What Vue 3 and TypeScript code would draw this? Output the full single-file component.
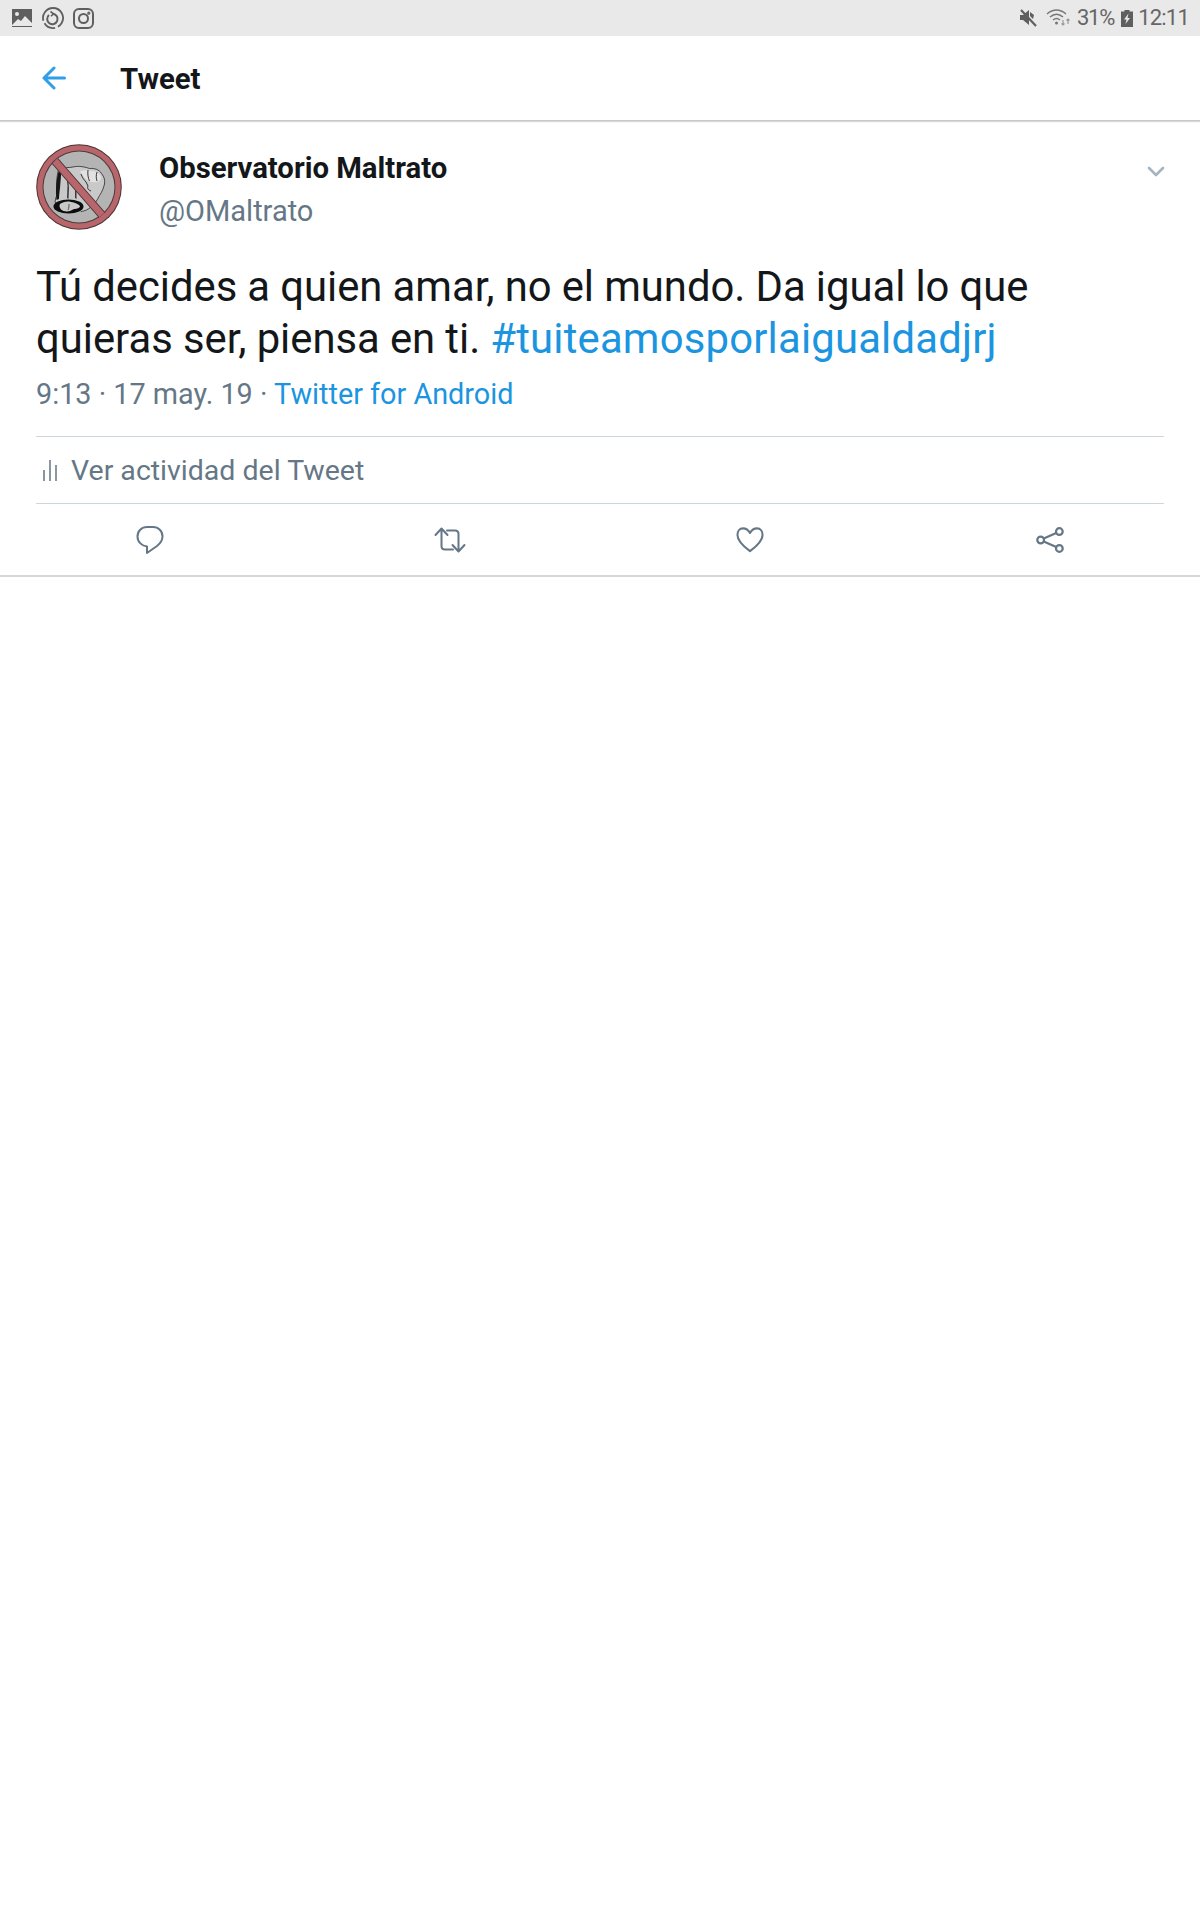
<script setup lang="ts">
const actions = ['reply', 'retweet', 'like', 'share']
</script>

<template>
  <div class="page">
    <div class="status">
      <div class="status-left">
        <svg width="22" height="20" viewBox="0 0 22 20"><path fill="#5f5f5f" d="M1 1h20v18H1z"/><circle cx="6" cy="6" r="2" fill="#e9e9e9"/><path fill="#e9e9e9" d="M1 17l6-6 3 2 4-5 7 7v3H1z"/></svg>
        <svg width="22" height="22" viewBox="0 0 22 22" fill="none" stroke="#5f5f5f"><path stroke-width="1.800" stroke-dasharray="26 3 12 3" d="M11 1a10 10 0 1 1 -.01 0"/><path stroke-width="2" d="M7 8a5.200 5.200 0 1 0 4-1.200"/><path stroke-width="1.600" d="M8.500 4.500l3 2.300-2.500 2.500"/></svg>
        <svg width="21" height="21" viewBox="0 0 21 21" fill="none" stroke="#5f5f5f" stroke-width="2"><rect x="1" y="1" width="19" height="19" rx="5"/><circle cx="10.500" cy="10.500" r="4.500"/><circle cx="15.800" cy="5.200" r=".6" fill="#5f5f5f"/></svg>
      </div>
      <div class="status-right">
        <svg class="mute" width="18" height="18" viewBox="0 0 18 18"><path fill="#5f5f5f" d="M1 6h3l6-5v15l-6-5H1z M11 3l4 3-1 4-3-3z"/><path stroke="#e9e9e9" stroke-width="1" d="M1 0l15 16"/><path stroke="#5f5f5f" stroke-width="2.200" d="M2 1l15 16"/></svg>
        <svg class="wifi" width="25" height="18" viewBox="0 0 25 18" fill="none" stroke="#777"><path stroke-width="1.500" d="M1 5c6-5 13-5 19 0M4 8c4-3.500 9-3.500 13 0M7 11c2.500-2 4.500-2 7 0"/><circle cx="10.500" cy="14" r="1.500" fill="#777" stroke="none"/><path stroke-width="1.200" stroke="#999" d="M17 11v5M15.500 14.500l1.500 1.500 1.500-1.500M22 15v-5M20.500 11.500l1.500-1.500 1.500 1.500"/></svg>
        <span class="st-text pct">31%</span>
        <svg class="batt" width="12" height="17" viewBox="0 0 12 17"><path fill="#5f5f5f" d="M3.500 0h5v1.500H12V17H0V1.500h3.500z"/><path fill="#e9e9e9" d="M7.500 3.500L3 9.500h2.500L4.500 14l4.500-6H6.500z"/></svg>
        <span class="st-text time">12:11</span>
      </div>
    </div>

    <header class="bar">
      <svg class="back" width="24" height="24" viewBox="0 0 24 24" fill="none" stroke="#2f9fe8" stroke-width="3" stroke-linecap="round" stroke-linejoin="round"><path d="M2.500 12h20M12 2L2 12l10 10"/></svg>
      <h1 class="title">Tweet</h1>
    </header>

    <main class="tweet">
      <div class="author">
        <svg class="avatar" width="86" height="86" viewBox="0 0 86 86">
          <circle cx="43" cy="43" r="42.800" fill="#4a3434"/>
          <circle cx="43" cy="43" r="41.800" fill="#b8666b"/>
          <circle cx="43" cy="43" r="36.500" fill="#4a3c3c"/>
          <circle cx="43" cy="43" r="35.500" fill="#b4b4b4"/>
          <path fill="#c9c9c9" stroke="#2a2a2a" stroke-width=".8" d="M23.500 24.500C28 23 33 24 37 23c6-1.500 12 0 16.500 1.500 5-.5 9.500 1 12 5 3 3.500 3.500 7 3 10.500-1 4-2.500 8-5 11.500-2 4.500-5 8.500-8.500 11.500-3 2.500-6 4-10 4.500l-6-6-15 .5-5-4 1-5 1-1c-1-10-.5-22 3-32z"/>
          <path fill="#e2e2e2" d="M44 27c4-1 10-1 12 0 4 0 8 2 9 6 0 3-2 5-5 5-5 1-10-2-13-6z"/>
          <path fill="#161616" d="M23.500 25l2 1c-.5 5-1 12-1.500 18-.5 4-1 8-1 11l-2.500 1c-1-10-.5-22 3-31z"/>
          <path fill="#3a3a3a" d="M30 28l1.500-1 1.500 17-.5 11-1.500-1 .5-12zM39 39h1.500v16l-1.500-1z"/>
          <path fill="none" stroke="#222" stroke-width=".9" d="M52 26c-.5 4 0 8 1.500 11M61 28c-1 3-1 6 0 9M45 30c1 3 3 6 5 8l2 4c-1 2 0 4 3 5"/>
          <ellipse cx="32.500" cy="62.500" rx="15" ry="7" fill="#0d0d0d"/>
          <path fill="#c9c9c9" d="M24 60c3-2 7-3 11-2 4 .5 7 2 9 4 0 2-3 3-6 3l-4 2c-3 1-7 .5-9-1.500-1.500-2-2-4-1-5.500z"/>
          <path fill="none" stroke="#333" stroke-width=".8" d="M33 60c0 2 0 4-1 6"/>
          <path stroke="#4a3434" stroke-width="8.500" d="M19 17l47 54"/>
          <path stroke="#b8666b" stroke-width="6.500" d="M19 17l47 54"/>
        </svg>
        <div class="names">
          <div class="name">Observatorio Maltrato</div>
          <div class="handle">@OMaltrato</div>
        </div>
        <svg class="chevron" width="18" height="11" viewBox="0 0 18 11" fill="none" stroke="#a6b4bf" stroke-width="2.600" stroke-linecap="round" stroke-linejoin="round"><path d="M2 2l7 7 7-7"/></svg>
      </div>

      <p class="body">Tú decides a quien amar, no el mundo. Da igual lo que quieras ser, piensa en ti. <span class="link tag">#tuiteamosporlaigualdadjrj</span></p>

      <div class="meta">9:13 · 17 may. 19 · <span class="link">Twitter for Android</span></div>

      <div class="activity">
        <svg width="16" height="24" viewBox="0 0 16 24" fill="none" stroke="#8a96a2" stroke-width="2"><path d="M2 12v11M8 2v21M14 7v16"/></svg>
        <span>Ver actividad del Tweet</span>
      </div>

      <div class="actions">
        <div v-for="a in actions" :key="a" class="action">
          <svg v-if="a === 'reply'" width="28" height="30" viewBox="0 0 28 30" fill="none" stroke="#657786" stroke-width="2" stroke-linejoin="round"><path d="M11 2h6c5.500 0 9.500 4 9.500 9.500 0 4.500-3 7.500-5.500 9.500l-10 7v-6.500C6 21 1.500 17 1.500 11.500 1.500 6 5.500 2 11 2z"/></svg>
          <svg v-else-if="a === 'retweet'" width="32" height="26" viewBox="0 0 32 26" fill="none" stroke="#657786" stroke-width="2" stroke-linecap="round" stroke-linejoin="round"><path d="M1.500 8l6-6.500 6 6.500M7.500 2v17c0 2 1.500 3.500 3.500 3.500h8M30.500 18l-6 6.500-6-6.500M24.500 24V7c0-2-1.500-3.500-3.500-3.500h-8"/></svg>
          <svg v-else-if="a === 'like'" width="28" height="26" viewBox="0 0 30 28" fill="none" stroke="#657786" stroke-width="2.200" stroke-linejoin="round"><path d="M15 6.500C12.500 2 9.500 1.500 7.500 1.500 3.500 1.500 1.500 5 1.500 8.500c0 7 7.500 13 13.500 17.500 6-4.500 13.500-10.500 13.500-17.500 0-3.500-2-7-6-7-2 0-5 .5-7.500 5z"/></svg>
          <svg v-else width="28" height="28" viewBox="0 0 30 28" fill="none" stroke="#657786" stroke-width="2.400"><circle cx="25" cy="5" r="3.600"/><circle cx="5" cy="14" r="3.600"/><circle cx="25" cy="23" r="3.600"/><path d="M8.300 12.500l13.400-6M8.300 15.500l13.400 6"/></svg>
        </div>
      </div>
    </main>
  </div>
</template>

<style>
html, body { margin: 0; background: #fff; }
</style>

<style scoped>
.page {
  width: 1200px;
  height: 1920px;
  background: #fff;
  font-family: Roboto, "Liberation Sans", sans-serif;
  overflow: hidden;
}
.status {
  height: 36px;
  background: #e9e9e9;
  display: flex;
  justify-content: space-between;
  align-items: center;
  padding: 0 11px;
}
.status-left { display: flex; align-items: center; gap: 9px; }
.status-right { display: flex; align-items: center; gap: 6px; color: #666; }
.st-text { font-size: 22px; line-height: 36px; letter-spacing: -1.200px; }
.time { letter-spacing: -.8px; margin-left: -1px; }
.mute { margin-right: 3px; }
.batt { margin: 0 0 0 1px; }
.bar {
  height: 84px;
  display: flex;
  align-items: center;
  padding-left: 42px;
  border-bottom: 1px solid #c8c8c8;
  box-shadow: 0 1px 1px #d8d8d8;
}
.title {
  margin: 2px 0 0 54px;
  font-size: 29.300px;
  font-weight: 700;
  color: #14171a;
}
.tweet {
  padding: 0 36px;
  border-bottom: 2px solid #d3d8dc;
  height: 456px;
  box-sizing: border-box;
}
.author {
  display: flex;
  align-items: flex-start;
  padding-top: 23px;
}
.avatar { flex: none; }
.names { margin-left: 37px; flex: 1; }
.name { margin-top: 2px; font-size: 29.300px; line-height: 44px; font-weight: 700; color: #14171a; }
.handle { margin-top: 1px; font-size: 29px; line-height: 40px; color: #657786; }
.chevron { margin-top: 22px; margin-right: -1px; }
.body {
  margin: 30px 0 0;
  font-size: 41.800px;
  word-spacing: -.250px;
  line-height: 52px;
  color: #14171a;
}
.link { color: #1b95e0; }
.tag { letter-spacing: .200px; }
.meta {
  margin-top: 9px;
  font-size: 28.800px;
  line-height: 40px;
  color: #657786;
}
.activity {
  margin-top: 22px;
  height: 68px;
  box-sizing: border-box;
  border-top: 1px solid #ccd6dd;
  border-bottom: 1px solid #ccd6dd;
  display: flex;
  align-items: center;
  gap: 13px;
  padding-left: 6px;
  font-size: 28.500px;
  color: #657786;
}
.actions {
  display: grid;
  grid-template-columns: repeat(4, 300px);
  margin-left: -36px;
  height: 71px;
}
.action { display: flex; align-items: center; justify-content: center; }
</style>
